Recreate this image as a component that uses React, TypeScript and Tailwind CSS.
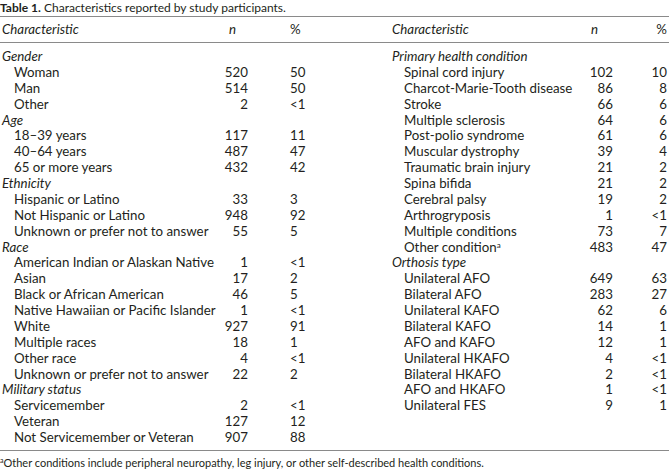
import React from "react";

type Row = { label: string; n?: string; p?: string; head?: boolean; sup?: string };

const left: Row[] = [
  { label: "Gender", head: true },
  { label: "Woman", n: "520", p: "50" },
  { label: "Man", n: "514", p: "50" },
  { label: "Other", n: "2", p: "<1" },
  { label: "Age", head: true },
  { label: "18–39 years", n: "117", p: "11" },
  { label: "40–64 years", n: "487", p: "47" },
  { label: "65 or more years", n: "432", p: "42" },
  { label: "Ethnicity", head: true },
  { label: "Hispanic or Latino", n: "33", p: "3" },
  { label: "Not Hispanic or Latino", n: "948", p: "92" },
  { label: "Unknown or prefer not to answer", n: "55", p: "5" },
  { label: "Race", head: true },
  { label: "American Indian or Alaskan Native", n: "1", p: "<1" },
  { label: "Asian", n: "17", p: "2" },
  { label: "Black or African American", n: "46", p: "5" },
  { label: "Native Hawaiian or Pacific Islander", n: "1", p: "<1" },
  { label: "White", n: "927", p: "91" },
  { label: "Multiple races", n: "18", p: "1" },
  { label: "Other race", n: "4", p: "<1" },
  { label: "Unknown or prefer not to answer", n: "22", p: "2" },
  { label: "Military status", head: true },
  { label: "Servicemember", n: "2", p: "<1" },
  { label: "Veteran", n: "127", p: "12" },
  { label: "Not Servicemember or Veteran", n: "907", p: "88" },
];

const right: Row[] = [
  { label: "Primary health condition", head: true },
  { label: "Spinal cord injury", n: "102", p: "10" },
  { label: "Charcot-Marie-Tooth disease", n: "86", p: "8" },
  { label: "Stroke", n: "66", p: "6" },
  { label: "Multiple sclerosis", n: "64", p: "6" },
  { label: "Post-polio syndrome", n: "61", p: "6" },
  { label: "Muscular dystrophy", n: "39", p: "4" },
  { label: "Traumatic brain injury", n: "21", p: "2" },
  { label: "Spina bifida", n: "21", p: "2" },
  { label: "Cerebral palsy", n: "19", p: "2" },
  { label: "Arthrogryposis", n: "1", p: "<1" },
  { label: "Multiple conditions", n: "73", p: "7" },
  { label: "Other condition", n: "483", p: "47", sup: "a" },
  { label: "Orthosis type", head: true },
  { label: "Unilateral AFO", n: "649", p: "63" },
  { label: "Bilateral AFO", n: "283", p: "27" },
  { label: "Unilateral KAFO", n: "62", p: "6" },
  { label: "Bilateral KAFO", n: "14", p: "1" },
  { label: "AFO and KAFO", n: "12", p: "1" },
  { label: "Unilateral HKAFO", n: "4", p: "<1" },
  { label: "Bilateral HKAFO", n: "2", p: "<1" },
  { label: "AFO and HKAFO", n: "1", p: "<1" },
  { label: "Unilateral FES", n: "9", p: "1" },
];

function Label({ r }: { r: Row }) {
  if (r.head) return <span className="italic">{r.label}</span>;
  return (
    <span className="pl-[12px]">
      {r.label}
      {r.sup && <sup className="text-[8px]">{r.sup}</sup>}
    </span>
  );
}

export default function App() {
  return (
    <div
      className="w-[669px] h-[470px] bg-white text-[#231f20] overflow-hidden"
      style={{ fontFamily: "Lato, 'Open Sans', sans-serif" }}
    >
      <div className="h-[16px] text-[12px] leading-[14px] pt-[1px] whitespace-nowrap">
        <span className="font-bold">Table 1.</span>{" "}
        <span>Characteristics reported by study participants.</span>
      </div>
      <div className="h-px bg-[#8a8a8a]" />
      <div className="flex h-[25px] items-center text-[13.3px]">
        <div className="w-[334px] grid grid-cols-[206px_40px_42px_1fr] pl-[2px]">
          <span className="italic">Characteristic</span>
          <span className="italic text-right pr-[12px]">n</span>
          <span />
          <span>%</span>
        </div>
        <div className="w-[335px] grid grid-cols-[181px_40px_55px] pl-[58px]">
          <span className="italic">Characteristic</span>
          <span className="italic text-right pr-[15px]">n</span>
          <span className="text-right pr-[1px]">%</span>
        </div>
      </div>
      <div className="h-px bg-[#8a8a8a]" />
      <div className="flex pt-[6px] pb-[4px] text-[13.3px] leading-[15.875px]">
        <div className="w-[334px] flex flex-col pl-[2px]">
          {left.map((r, i) => (
            <div key={i} className="grid grid-cols-[206px_40px_42px_1fr] whitespace-nowrap">
              <Label r={r} />
              <span className="text-right">{r.n}</span>
              <span />
              <span>{r.p}</span>
            </div>
          ))}
        </div>
        <div className="w-[335px] flex flex-col pl-[58px]">
          {right.map((r, i) => (
            <div key={i} className="grid grid-cols-[181px_40px_55px] whitespace-nowrap">
              <Label r={r} />
              <span className="text-right">{r.n}</span>
              <span className="text-right pr-[1px]">{r.p}</span>
            </div>
          ))}
        </div>
      </div>
      <div className="h-px bg-[#8a8a8a]" />
      <div className="pt-[5px] text-[11px] leading-[14px] whitespace-nowrap">
        <sup className="text-[7px]">a</sup>Other conditions include peripheral neuropathy, leg injury, or other self-described health conditions.
      </div>
    </div>
  );
}
